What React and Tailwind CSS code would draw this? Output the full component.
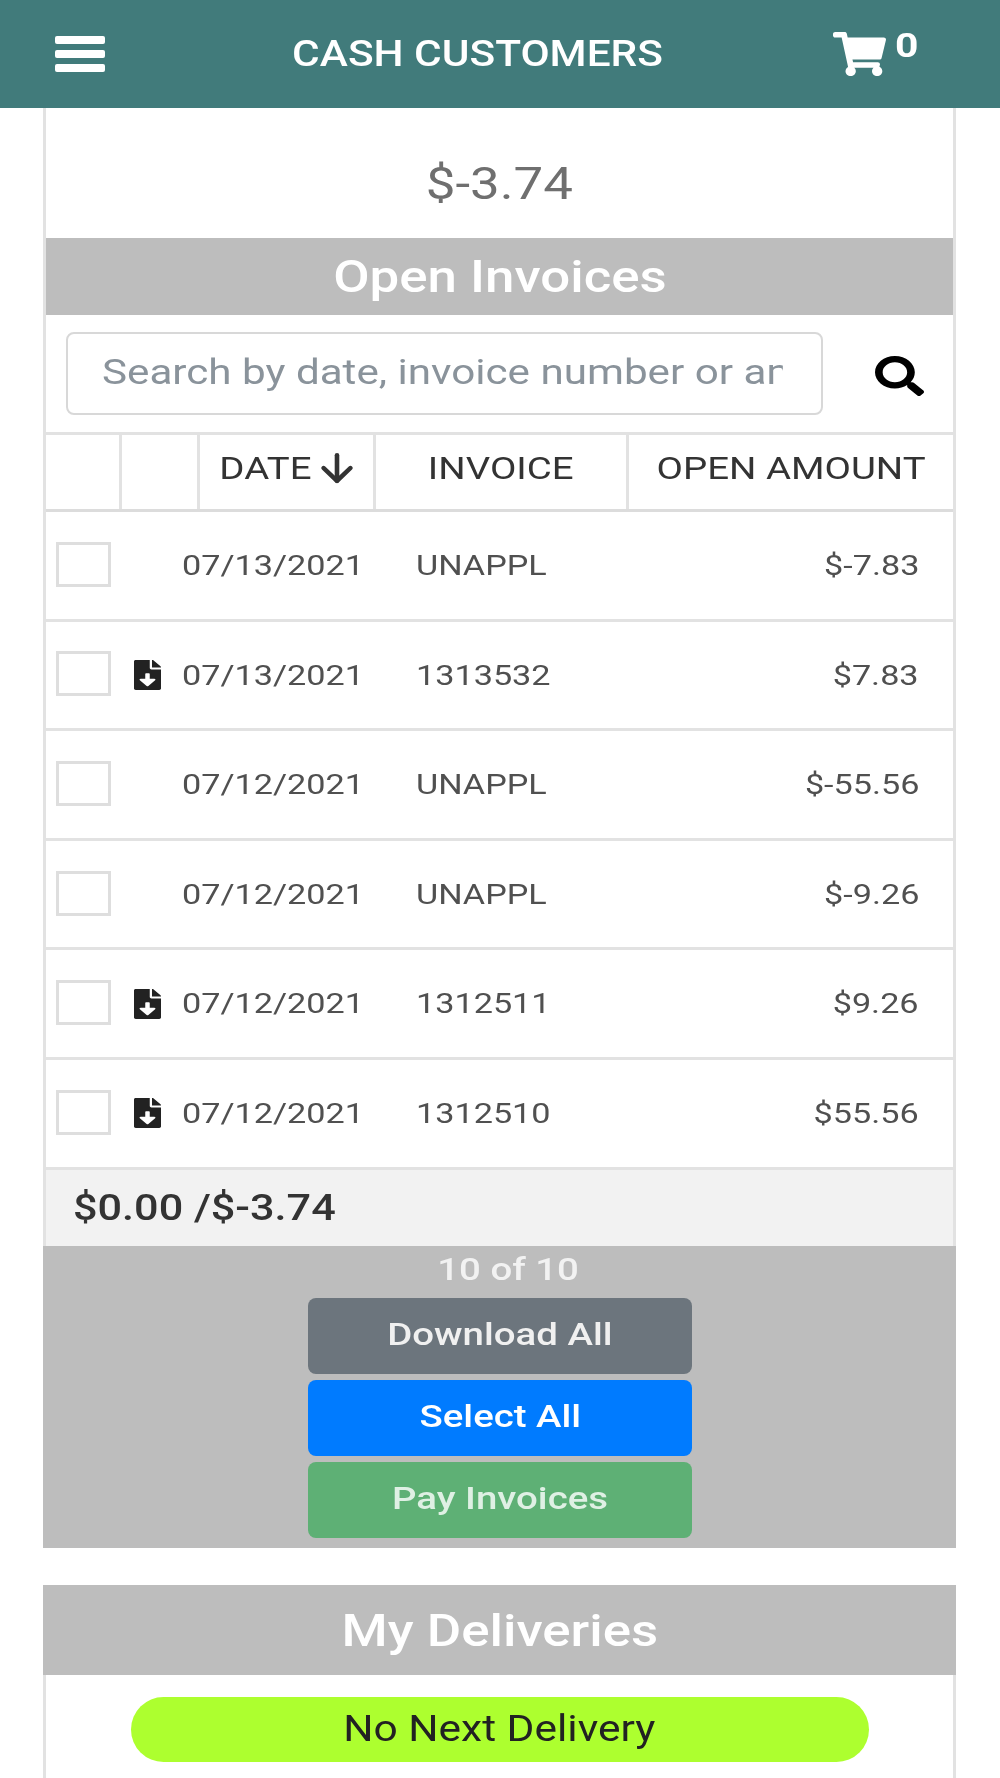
import { ArrowDown } from "lucide-react";
import { FaShoppingCart, FaSearch, FaFileDownload } from "react-icons/fa";

const invoices = [
  { date: "07/13/2021", number: "UNAPPL", amount: "$-7.83", file: false },
  { date: "07/13/2021", number: "1313532", amount: "$7.83", file: true },
  { date: "07/12/2021", number: "UNAPPL", amount: "$-55.56", file: false },
  { date: "07/12/2021", number: "UNAPPL", amount: "$-9.26", file: false },
  { date: "07/12/2021", number: "1312511", amount: "$9.26", file: true },
  { date: "07/12/2021", number: "1312510", amount: "$55.56", file: true },
];

// the screenshot is stretched sideways, so text gets widened the same way
const Wide = ({ className = "", children }) => (
  <span className={`inline-block scale-x-[1.2] ${className}`}>{children}</span>
);

const InvoiceRow = ({ invoice }) => (
  <div className="grid h-[109.6px] grid-cols-[88px_48px_234px_1fr_auto] items-center border-b-[3px] border-[#e2e2e2] pr-[34px] pt-[2px] text-[28.5px] text-[#505050]">
    <div className="mb-[4px] ml-[10px] h-[45px] w-[55px] border-[3px] border-[#dedede] bg-white" />
    <div className="mb-[2px] text-[#222222]">
      {invoice.file && <FaFileDownload preserveAspectRatio="none" className="h-[30px] w-[27px]" />}
    </div>
    <div><Wide className="origin-left">{invoice.date}</Wide></div>
    <div><Wide className="origin-left">{invoice.number}</Wide></div>
    <div><Wide className="origin-right">{invoice.amount}</Wide></div>
  </div>
);

const ActionButton = ({ color, children }) => (
  <button className={`h-[76px] w-[384px] rounded-[8px] pb-[4px] text-center text-[32px] font-medium ${color}`}>
    <Wide>{children}</Wide>
  </button>
);

export default function App() {
  return (
    <div className="h-[1778px] overflow-hidden bg-white font-['Roboto',sans-serif] blur-[0.6px]">
      <header className="flex h-[108px] items-center justify-between bg-[#417b7b] pl-[55px] pr-[82px] text-white">
        <div className="flex w-[50px] flex-col gap-[6px]">
          <div className="h-[8px] rounded-[2px] bg-white" />
          <div className="h-[8px] rounded-[2px] bg-white" />
          <div className="h-[8px] rounded-[2px] bg-white" />
        </div>
        <h1 className="ml-[17px] text-[36px] font-medium">
          <Wide className="scale-x-[1.177]">CASH CUSTOMERS</Wide>
        </h1>
        <div className="flex items-start">
          <FaShoppingCart preserveAspectRatio="none" className="h-[44px] w-[53px]" />
          <span className="-mt-[6px] ml-[9px] w-[23px] text-[34px] font-bold leading-[38px]">
            <Wide className="origin-left">0</Wide>
          </span>
        </div>
      </header>

      <main className="ml-[43px] w-[913px]">
        <section className="border-x-[3px] border-[#e2e2e2]">
          <div className="flex h-[130px] items-center justify-center pt-[22px] text-[44px] text-[#6f6f6f]">
            <Wide>$-3.74</Wide>
          </div>
          <h2 className="flex h-[77px] items-center justify-center bg-[#bdbdbd] text-[44px] font-medium text-white">
            <Wide>Open Invoices</Wide>
          </h2>

          <div className="flex h-[120px] items-center border-b-[3px] border-[#e2e2e2] pl-[20px]">
            <div className="h-[83px] w-[757px] overflow-hidden rounded-[8px] border-2 border-[#d8d8d8] px-[34px]">
              <input
                placeholder="Search by date, invoice number or amount"
                className="h-full w-[565px] origin-left scale-x-[1.205] pb-[2px] text-[35px] outline-none placeholder:text-[#8a939b]"
              />
            </div>
            <FaSearch preserveAspectRatio="none" className="ml-[52px] mt-[4px] h-[40px] w-[49px] text-black" />
          </div>

          <div className="grid h-[77px] grid-cols-[76px_78px_176px_253px_1fr] border-b-[3px] border-[#dcdcdc] text-[32px] text-[#333333]">
            <div className="border-r-[3px] border-[#e2e2e2]" />
            <div className="border-r-[3px] border-[#e2e2e2]" />
            <div className="flex items-center border-r-[3px] border-[#e2e2e2] pb-[8px] pl-[27px]">
              <Wide>DATE</Wide>
              <ArrowDown preserveAspectRatio="none" className="ml-[10px] h-[44px] w-[46px] shrink-0" strokeWidth={2.4} />
            </div>
            <div className="flex items-center justify-center border-r-[3px] border-[#e2e2e2] pb-[8px]">
              <Wide>INVOICE</Wide>
            </div>
            <div className="flex items-center justify-center pb-[8px]">
              <Wide>OPEN AMOUNT</Wide>
            </div>
          </div>

          {invoices.map((invoice, i) => (
            <InvoiceRow key={i} invoice={invoice} />
          ))}

          <div className="flex h-[76px] items-center bg-[#f2f2f2] pl-[27px] text-[36px] font-medium text-[#333333]">
            <Wide className="origin-left">$0.00 /$-3.74</Wide>
          </div>

          <div className="-mx-[3px] flex h-[302px] flex-col items-center bg-[#bdbdbd]">
            <div className="ml-[18px] h-[52px] text-[32px] font-medium leading-[46px] text-[#f2f2f2]">
              <Wide>10 of 10</Wide>
            </div>
            <div className="ml-[1px] flex flex-col gap-[6px]">
              <ActionButton color="bg-[#6c757d] text-[#f0f0f0]">Download All</ActionButton>
              <ActionButton color="bg-[#007bff] text-white">Select All</ActionButton>
              <ActionButton color="bg-[#5eb075] text-[#dff0e4]">Pay Invoices</ActionButton>
            </div>
          </div>
        </section>

        <section className="mt-[37px] border-x-[3px] border-[#e2e2e2]">
          <h2 className="-mx-[3px] flex h-[90px] items-center justify-center bg-[#bdbdbd] pt-[3px] text-[44px] font-medium text-white">
            <Wide>My Deliveries</Wide>
          </h2>
          <div className="flex h-[110px] justify-center pt-[22px]">
            <div className="flex h-[65px] w-[738px] items-center justify-center rounded-full bg-[#adff2f] text-[36px] text-[#222222]">
              <Wide className="scale-x-[1.18]">No Next Delivery</Wide>
            </div>
          </div>
        </section>
      </main>
    </div>
  );
}
